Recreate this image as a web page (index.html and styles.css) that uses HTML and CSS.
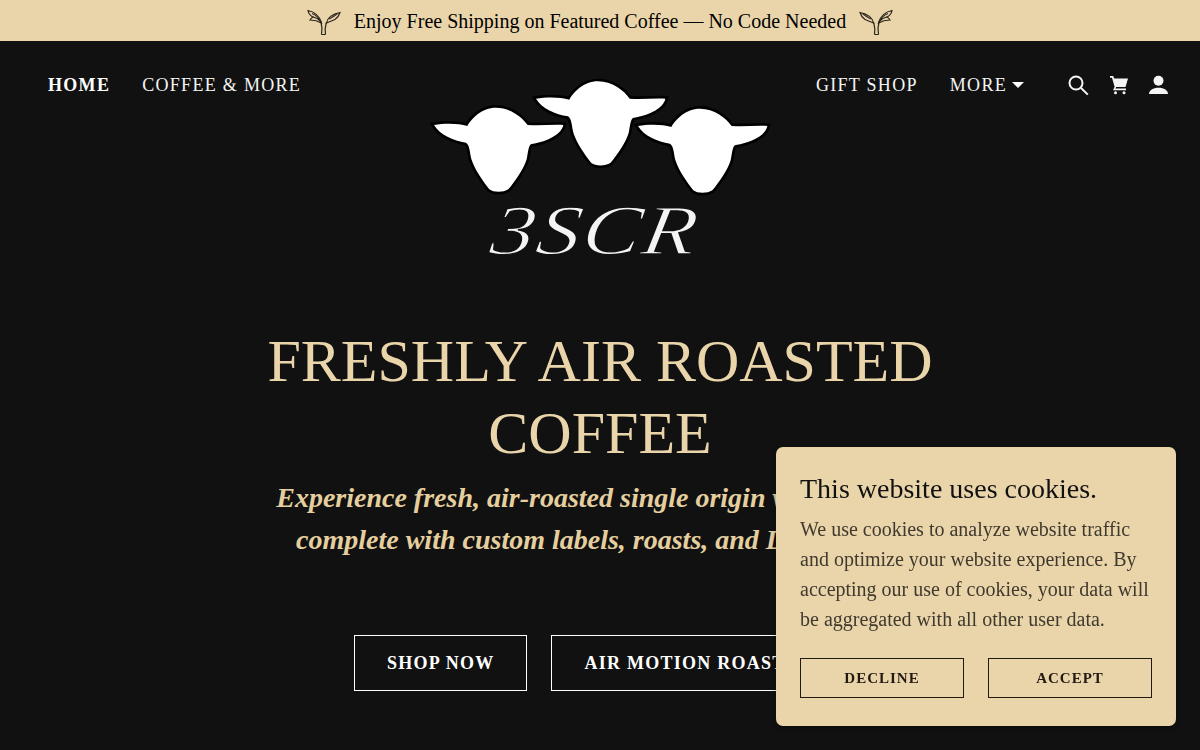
FILE: index.html
```html
<!DOCTYPE html>
<html lang="en">

<head>
    <meta charset="UTF-8">
    <meta name="viewport" content="width=device-width, initial-scale=1.0">
    <title>3SCR Coffee</title>
    <link rel="stylesheet" href="styles.css">
</head>

<body>

    <svg class="defs" width="0" height="0">
        <symbol id="sprout" viewBox="0 0 34 28">
            <path d="M14.500 26.500c.8-4 .8-8-.5-12M18.500 26.500c-.8-4-.3-8 .8-12M14.500 26.500h4" />
            <path d="M14.500 15C13 9 8 4 1 2.500c.5 3 2 5 5 6.500-1 .5-2 1.500-3 3 4 0 8 1 11.500 3z" />
            <path d="M19.500 15c1-5 6-9 13.500-10.500-1 3.500-3 5.500-5 7-3 1.500-5.500 2-8.500 3.500z" />
            <path d="M5 5.500c4 1.500 7 4.500 9.500 9M6 9c3 .5 6 2.500 8.500 6M22 11c3-1.500 6-3.500 8.500-5.500" />
        </symbol>
        <symbol id="sheep" viewBox="0 0 1080 600">
            <path d="M42 165C75 160 115 160 142 168C155 145 185 113 228 113C270 113 305 140 323 165C360 168 395 163 430 165C425 192 385 214 335 222C325 224 324 250 320 268C312 295 285 335 265 358C250 368 220 368 208 358C190 335 165 300 155 270C149 250 150 225 138 218C100 212 60 195 42 165Z" />
        </symbol>
    </svg>

    <div class="banner">
        <svg class="sprout"><use href="#sprout" /></svg>
        <p>Enjoy Free Shipping on Featured Coffee — No Code Needed</p>
        <svg class="sprout flip"><use href="#sprout" /></svg>
    </div>

    <div class="page">
        <header class="top">
            <nav class="nav nav-left">
                <a href="#" class="active">HOME</a>
                <a href="#">COFFEE &amp; MORE</a>
            </nav>

            <svg class="logo" viewBox="0 0 1080 600">
                <use href="#sheep" class="head" />
                <use href="#sheep" class="head" x="306" y="-79" />
                <use href="#sheep" class="head" x="612" y="3" />
                <text transform="translate(205 553) scale(1.24 1) skewX(-8)" class="logo-text">3SCR</text>
            </svg>

            <div class="nav-right">
                <nav class="nav">
                    <a href="#">GIFT SHOP</a>
                    <a href="#">MORE<span class="caret"></span></a>
                </nav>
                <div class="icons">
                    <svg viewBox="0 0 24 24" width="24" height="24" class="icon-line">
                        <circle cx="10" cy="10" r="6.500" />
                        <path d="M14.800 14.800l7 6.800" />
                    </svg>
                    <svg viewBox="0 0 24 24" width="24" height="24" class="icon-fill">
                        <path d="M4 3h3.200l1 2.500H22l-2.500 8.500h-9.300l-.9 1.500H20v1.800H7l1.600-3.500L6 4.800H4z" />
                        <circle cx="9.500" cy="19.700" r="1.500" />
                        <circle cx="18" cy="19.700" r="1.500" />
                    </svg>
                    <svg viewBox="0 0 24 24" width="24" height="24" class="icon-fill">
                        <circle cx="12.500" cy="7.800" r="5" />
                        <path d="M3 21c0-3.800 4-6.300 9.500-6.300S22 17.200 22 21z" />
                    </svg>
                </div>
            </div>
        </header>

        <section class="hero">
            <h1>FRESHLY AIR ROASTED COFFEE</h1>
            <p class="tagline">Experience fresh, air-roasted single origin with a brand,<br>complete with custom labels, roasts, and Distribution</p>
            <div class="buttons">
                <a href="#" class="btn">SHOP NOW</a>
                <a href="#" class="btn">AIR MOTION ROASTER</a>
            </div>
        </section>
    </div>

    <div class="cookies">
        <h4>This website uses cookies.</h4>
        <p>We use cookies to analyze website traffic and optimize your website experience. By accepting our use of cookies, your data will be aggregated with all other user data.</p>
        <div class="cookie-btns">
            <button>DECLINE</button>
            <button>ACCEPT</button>
        </div>
    </div>

</body>

</html>
```

FILE: styles.css
```css
* {
    box-sizing: border-box;
}

html,
body {
    height: 100%;
}

body {
    margin: 0;
    overflow: hidden;
    background-color: #111111;
    font-family: "Liberation Serif", "Times New Roman", serif;
}

a {
    color: inherit;
    text-decoration: none;
}

.defs {
    position: absolute;
}

.banner {
    display: flex;
    justify-content: center;
    align-items: center;
    gap: 13px;
    height: 41px;
    padding-top: 2px;
    background-color: #ead5ab;
    color: #000;
}

.banner p {
    margin: 0;
    font-size: 20px;
}

.sprout {
    width: 34px;
    height: 28px;
    fill: none;
    stroke: #2a261c;
    stroke-width: 1.200;
}

.flip {
    transform: scaleX(-1);
}

.page {
    color: #fff;
}

.top {
    display: grid;
    grid-template-columns: 1fr 360px 1fr;
    align-items: start;
    padding: 0 30px;
}

.nav {
    display: flex;
    gap: 32px;
    font-size: 18px;
    letter-spacing: 1.300px;
    line-height: 24px;
    color: #f5f5f5;
    padding-top: 32px;
}

.nav-left {
    padding-left: 18px;
}

.nav .active {
    font-weight: bold;
    color: #fff;
}

.caret {
    display: inline-block;
    margin-left: 5px;
    vertical-align: 3px;
    border-left: 6px solid transparent;
    border-right: 6px solid transparent;
    border-top: 6px solid #fff;
}

.logo {
    display: block;
    width: 360px;
    height: 200px;
    margin-top: 29px;
}

.head {
    fill: #fff;
    stroke: #000;
    stroke-width: 16;
    paint-order: stroke;
}

.logo-text {
    font-family: "Liberation Serif", serif;
    font-style: italic;
    font-size: 212px;
    letter-spacing: 4px;
    fill: #f4f4f4;
    stroke: #111;
    stroke-width: 4;
}

.nav-right {
    display: flex;
    justify-content: flex-end;
}

.icons {
    display: flex;
    gap: 16px;
    margin-left: 42px;
    padding-top: 32px;
}

.icon-line {
    fill: none;
    stroke: #f5f5f5;
    stroke-width: 2;
}

.icon-fill {
    fill: #f5f5f5;
}

.hero {
    text-align: center;
    margin-top: 55px;
}

.hero h1 {
    width: 760px;
    margin: 0 auto;
    font-size: 60px;
    font-weight: normal;
    line-height: 72px;
    color: #ead5ab;
}

.tagline {
    margin: 8px 0 0;
    padding-left: 2px;
    font-size: 28px;
    font-style: italic;
    font-weight: bold;
    line-height: 42px;
    color: #e5cf9f;
}

.buttons {
    display: flex;
    justify-content: center;
    gap: 24px;
    margin-top: 74px;
}

.btn {
    display: flex;
    align-items: center;
    height: 56px;
    padding: 0 32px;
    border: 1px solid #fff;
    font-size: 18px;
    font-weight: bold;
    letter-spacing: 1.250px;
    color: #fff;
}

.cookies {
    position: fixed;
    right: 24px;
    bottom: 24px;
    width: 400px;
    padding: 25px 24px 28px;
    border-radius: 7px;
    background-color: #ead5ab;
    box-shadow: 0 2px 6px rgba(0, 0, 0, 0.3);
}

.cookies h4 {
    margin: 0 0 8px;
    font-size: 28px;
    font-weight: normal;
    line-height: 34px;
    color: #111;
}

.cookies p {
    margin: 0 0 24px;
    font-size: 20px;
    line-height: 30px;
    color: #403a2e;
}

.cookie-btns {
    display: grid;
    grid-template-columns: 1fr 1fr;
    gap: 24px;
}

.cookie-btns button {
    height: 40px;
    border: 1px solid #221a10;
    background: none;
    font-family: inherit;
    font-size: 15px;
    font-weight: bold;
    letter-spacing: 1px;
    color: #221a10;
}
```
